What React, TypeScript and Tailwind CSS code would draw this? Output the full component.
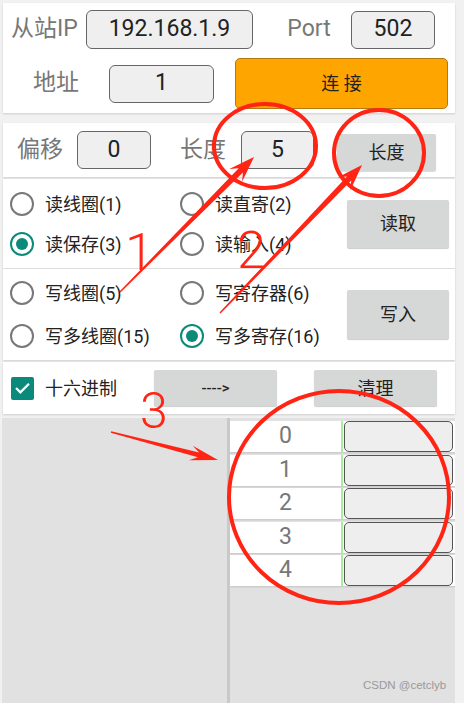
import React from "react";

const font = { fontFamily: '"Roboto","Noto Sans CJK SC","Noto Sans",sans-serif' };

function arrow(x1: number, y1: number, x2: number, y2: number, headLen: number, headW: number, tailW: number, neckW: number) {
  const dx = x2 - x1, dy = y2 - y1;
  const L = Math.hypot(dx, dy);
  const ux = dx / L, uy = dy / L;
  const px = -uy, py = ux;
  const hx = x2 - ux * headLen, hy = y2 - uy * headLen;
  const nx = x2 - ux * headLen * 0.72, ny = y2 - uy * headLen * 0.72;
  const pts = [
    [x1 + px * tailW / 2, y1 + py * tailW / 2],
    [nx + px * neckW / 2, ny + py * neckW / 2],
    [hx + px * headW / 2, hy + py * headW / 2],
    [x2, y2],
    [hx - px * headW / 2, hy - py * headW / 2],
    [nx - px * neckW / 2, ny - py * neckW / 2],
    [x1 - px * tailW / 2, y1 - py * tailW / 2],
  ];
  return pts.map((p) => p[0].toFixed(1) + "," + p[1].toFixed(1)).join(" ");
}

function Radio({ checked, label }: { checked?: boolean; label: string }) {
  return (
    <div className="flex items-center h-[40px]">
      <div
        className={
          "w-[24px] h-[24px] rounded-full border-[2.5px] flex items-center justify-center " +
          (checked ? "border-[#0b8a7b]" : "border-[#787878]")
        }
      >
        {checked && <div className="w-[12px] h-[12px] rounded-full bg-[#0b8a7b]" />}
      </div>
      <span className="ml-[11px] text-[18px] text-[#222]">{label}</span>
    </div>
  );
}

function Box({ w, h, text }: { w: string; h: string; text: string }) {
  return (
    <div className={`${w} ${h} rounded-[6px] border border-[#666] bg-[#efefef] flex items-center justify-center text-[23px] text-[#222]`}>
      {text}
    </div>
  );
}

export default function App() {
  const red = "#ff2414";
  return (
    <div className="relative w-[464px] h-[703px] bg-[#f1f1f1] overflow-hidden" style={font}>
      {/* Card 1 */}
      <div className="ml-[3px] mt-[3px] w-[452px] h-[110px] bg-white shadow-[0_1px_2px_rgba(0,0,0,0.15)] pt-[7px]">
        <div className="flex items-center h-[39px]">
          <div className="w-[83px] text-center text-[23px] text-[#777]">从站IP</div>
          <Box w="w-[167px]" h="h-[39px]" text="192.168.1.9" />
          <div className="w-[98px] pl-[14px] text-center text-[23px] text-[#777]">Port</div>
          <Box w="w-[84px]" h="h-[38px]" text="502" />
        </div>
        <div className="flex items-center h-[51px] mt-[9px]">
          <div className="w-[106px] text-center text-[23px] text-[#777]">地址</div>
          <Box w="w-[105px]" h="h-[38px]" text="1" />
          <div className="ml-[21px] w-[213px] h-[51px] rounded-[5px] bg-[#ffa500] border border-[#b37a10] flex items-center justify-center text-[18px] text-[#222]">
            连 接
          </div>
        </div>
      </div>

      {/* Card 2 */}
      <div className="ml-[3px] mt-[10px] w-[452px] h-[54px] bg-white shadow-[0_1px_2px_rgba(0,0,0,0.15)] flex items-center">
        <div className="w-[74px] text-center text-[23px] text-[#777]">偏移</div>
        <Box w="w-[74px]" h="h-[38px]" text="0" />
        <div className="w-[90px] pl-[14px] text-center text-[23px] text-[#777]">长度</div>
        <Box w="w-[73px]" h="h-[38px]" text="5" />
        <div className="ml-[23px] mt-[5px] w-[99px] h-[37px] rounded-[2px] bg-[#d6d7d7] shadow-[0_1px_1px_rgba(0,0,0,0.15)] flex items-center justify-center text-[18px] text-[#222]">
          长度
        </div>
      </div>

      {/* Card 3 radios */}
      <div className="ml-[3px] mt-[2px] w-[452px] bg-white shadow-[0_1px_2px_rgba(0,0,0,0.15)]">
        <div className="flex items-center h-[90px] border-b border-[#dedede] pl-[7px]">
          <div className="flex flex-col w-[170px] pt-[1px]">
            <Radio label="读线圈(1)" />
            <Radio checked label="读保存(3)" />
          </div>
          <div className="flex flex-col w-[167px] pt-[1px]">
            <Radio label="读直寄(2)" />
            <Radio label="读输入(4)" />
          </div>
          <div className="w-[102px] h-[48px] rounded-[2px] bg-[#d6d7d7] shadow-[0_1px_1px_rgba(0,0,0,0.2)] flex items-center justify-center text-[18px] text-[#222]">
            读取
          </div>
        </div>
        <div className="flex items-center h-[91px] pl-[7px]">
          <div className="flex flex-col w-[170px] gap-[3px]">
            <Radio label="写线圈(5)" />
            <Radio label="写多线圈(15)" />
          </div>
          <div className="flex flex-col w-[167px] gap-[3px]">
            <Radio label="写寄存器(6)" />
            <Radio checked label="写多寄存(16)" />
          </div>
          <div className="w-[102px] h-[49px] rounded-[2px] bg-[#d6d7d7] shadow-[0_1px_1px_rgba(0,0,0,0.2)] flex items-center justify-center text-[18px] text-[#222]">
            写入
          </div>
        </div>
      </div>

      {/* Card 4 */}
      <div className="ml-[3px] mt-[2px] w-[452px] h-[52px] bg-white shadow-[0_1px_2px_rgba(0,0,0,0.15)] flex items-center pl-[8px]">
        <div className="w-[23px] h-[23px] rounded-[2px] bg-[#0b8a7b] flex items-center justify-center">
          <svg width="17" height="17" viewBox="0 0 24 24" fill="none" stroke="white" strokeWidth="3.2" strokeLinecap="square">
            <path d="M4 12.5l5 5L20 6.5" />
          </svg>
        </div>
        <span className="ml-[11px] w-[109px] text-[18px] text-[#222]">十六进制</span>
        <div className="w-[123px] h-[36px] rounded-[2px] bg-[#d6d7d7] shadow-[0_1px_1px_rgba(0,0,0,0.2)] flex items-center justify-center text-[15px] text-[#222] font-medium">
          ----&gt;
        </div>
        <div className="ml-[37px] w-[123px] h-[36px] rounded-[2px] bg-[#d6d7d7] shadow-[0_1px_1px_rgba(0,0,0,0.2)] flex items-center justify-center text-[18px] text-[#222]">
          清理
        </div>
      </div>

      {/* Bottom area */}
      <div className="ml-[2px] mt-[4px] w-[453px] h-[286px] bg-[#e1e1e1] flex">
        <div className="w-[225px] h-full" />
        <div className="w-[3px] h-full bg-[#c9c9c9]" />
        <div className="flex-1 pt-[3px]">
          {[0, 1, 2, 3, 4].map((n) => (
            <div key={n} className="flex h-[31px] mb-[2.5px] bg-white shadow-[0_1.5px_0_#cdcdcd]">
              <div className="w-[111px] flex items-center justify-center text-[23px] text-[#777]">{n}</div>
              <div className="w-[2px] bg-[#a8f0a0]" />
              <div className="ml-[1px] w-[109px] h-[31px] rounded-[5px] border border-[#555] bg-[#eeeeee]" />
            </div>
          ))}
        </div>
      </div>

      {/* watermark */}
      <div className="absolute left-[363px] top-[677px] text-[11.5px] text-[#999]" style={{ fontFamily: '"Liberation Sans",Arial,sans-serif' }}>
        CSDN @cetclyb
      </div>

      {/* Red annotations overlay */}
      <svg className="absolute inset-0 pointer-events-none" width="464" height="703" viewBox="0 0 464 703">
        <ellipse cx="265" cy="146" rx="51" ry="42" fill="none" stroke={red} strokeWidth="4" />
        <ellipse cx="379" cy="153" rx="45" ry="43" fill="none" stroke={red} strokeWidth="4" />
        <ellipse cx="339" cy="497" rx="110" ry="106" fill="none" stroke={red} strokeWidth="4" />
        <polygon points={arrow(120, 292, 254, 157, 26, 18, 1.5, 6)} fill={red} />
        <polygon points={arrow(220, 313, 362, 165, 26, 18, 1.5, 6)} fill={red} />
        <polygon points={arrow(111, 432, 218, 460, 28, 15, 1.5, 5)} fill={red} />
        <text x="125" y="270" fill={red} fontSize="52" fontFamily="Roboto, sans-serif" fontWeight="300">1</text>
        <text x="237" y="268" fill={red} fontSize="52" fontFamily="Roboto, sans-serif" fontWeight="300">2</text>
        <text x="140" y="428" fill={red} fontSize="50" fontFamily="Roboto, sans-serif" fontWeight="300">3</text>
      </svg>
    </div>
  );
}
